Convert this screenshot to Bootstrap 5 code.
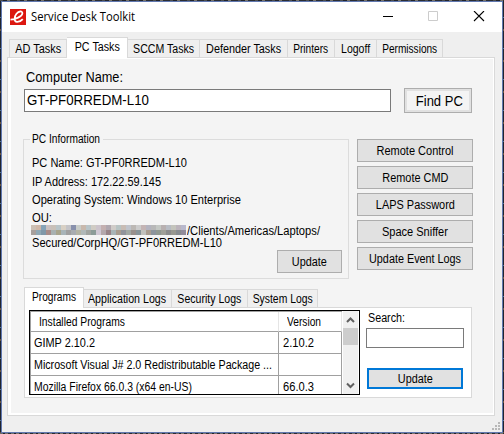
<!DOCTYPE html>
<html lang="en">
<head>
<meta charset="utf-8">
<meta name="viewport" content="width=device-width, initial-scale=1">
<title>Service Desk Toolkit</title>
<link href="https://cdn.jsdelivr.net/npm/bootstrap@5.3.0/dist/css/bootstrap.min.css" rel="stylesheet">
<style>
body{width:504px;height:434px;overflow:hidden;padding:1px;font:12px/16px "Liberation Sans",Arial,sans-serif;color:#000;
 background:repeating-linear-gradient(90deg,#4b4d50 0 3px,#22242a 3px 7px,#77736b 7px 10px,#2b2d33 10px 17px) 0 0/504px 1px no-repeat,repeating-linear-gradient(90deg,#6b6b6b 0 3px,#22242a 3px 5px,#77736b 5px 8px,#2b2d33 8px 11px) 0 433px/504px 1px no-repeat,repeating-linear-gradient(#20242d 0 17px,#507396 17px 18px,#20242d 18px 29px,#69523b 29px 31px)}
.win{width:502px;height:432px;border:1px solid #6078b0;background:#efefef;position:relative}
.t{display:inline-block;white-space:nowrap;transform-origin:0 50%}
.nav-link .t,.btn .t{transform-origin:50% 50%}
.titlebar{height:30px;background:#fff;padding-left:8px}
.ttl{font:12px/16px "Open Sans",sans-serif;margin-left:5px}
.tabrow{height:21px;margin:5px 0 -1px 7px;position:relative}
.tabrow .nav-link,.subtabs .nav-link{display:flex;justify-content:center;padding:0;color:#000;background:#efefef;border:1px solid #d9d9d9;border-left-width:0;border-radius:0;height:19px;line-height:19px;white-space:nowrap}
.tabrow .nav-link:first-child,.subtabs .nav-link:first-child{border-left-width:1px}
.tabrow .nav-link.active,.subtabs .nav-link.active{height:21px;line-height:19px;background:#fff;border-bottom:0;border-color:#d9d9d9}
.page{width:488px;height:359px;margin-left:5px;border:1px solid #d9d9d9;background:#f4f4f4;box-shadow:inset 3px 1px #fff,inset -1px -2px #fff;padding-left:15px}
.big{font-size:14px;white-space:nowrap}
.fld{background:#fff;border:1px solid #7a7a7a;border-radius:0;padding:0}
.wbtn{display:flex;justify-content:center;align-items:center;background:#e1e1e1;border:1px solid #adadad;border-radius:0;padding:0;font-size:12px;line-height:16px;color:#000;height:23px;white-space:nowrap}
.find{width:68px;height:25px;background:#f4f4f4;box-shadow:inset 0 0 0 2px #e1e1e1;font-size:14px;padding-left:2px}
.group{width:326px;height:140px;border:1px solid #dcdcdc;padding-left:8px;white-space:nowrap}
.group>div{height:16px}
.cap{width:73px;margin:-9px 0 0 -2px;padding-left:2px;background:#f4f4f4}
.mosaic{display:grid;grid-template-columns:repeat(31,5px);grid-auto-rows:5px;width:156px;height:10px;margin:2px 0 0 -1px}
.subtabs{height:21px;position:relative}
.subpage{width:448px;height:91px;border:1px solid #d9d9d9;background:#fff;padding:2px 0 0 4px}
.gridbox{width:331px;height:85px;border:1px solid #000;overflow:hidden}
.cells{width:312px;flex:none;display:grid;grid-template-columns:249px 63px;grid-template-rows:20px;grid-auto-rows:22px;border-top:1px solid #a0a0a0;box-shadow:inset 1px 0 #a0a0a0}
.cells>div{border-right:1px solid #a0a0a0;border-bottom:1px solid #a0a0a0;padding-left:4px;line-height:22px;white-space:nowrap;overflow:hidden}
.cells>.hd{line-height:20px;padding-left:9px;border-right-color:#e5e5e5}
.cells>.hd:nth-child(2){padding-left:8px}
.scroller{width:15px;margin-left:1px;background:#f0f0f0}
.thumb{width:15px;height:17px;background:#cdcdcd}
.primary{border:2px solid #0078d7;height:21px;width:96px}
.grip{position:absolute;right:2px;bottom:2px}
</style>
<script src="https://cdn.jsdelivr.net/npm/bootstrap@5.3.0/dist/js/bootstrap.bundle.min.js"></script>
</head>
<body>
<main class="win d-flex flex-column">
 <header class="titlebar d-flex align-items-center">
  <svg width="16" height="16" viewBox="0 0 16 16"><path fill="#dc1710" d="M0 0h16v16H0z"/><path d="M.5 10.6C5 10.6 12.4 7.4 12.4 4.3C12.4 1.6 8.8 2 6.5 4.8C3.8 8 4 12.6 7 12.9C9 13 11.2 12 12.8 10.2" fill="none" stroke="#fff" stroke-width="1.8"/></svg>
  <span class="ttl t" data-w="104">Service Desk Toolkit</span>
  <svg class="ms-auto" style="margin-right:17px" width="102" height="12" viewBox="0 0 102 12" fill="none"><path d="M0 5.5h10" stroke="#000"/><path d="M45.5.5h9v9h-9z" stroke="#ccc"/><path d="M91 0l10 10M101 0L91 10" stroke="#000" stroke-width="1.1"/></svg>
 </header>
 <nav class="nav tabrow align-items-end flex-nowrap">
  <a class="nav-link" style="width:58px"><span class="t" data-w="46">AD Tasks</span></a><a class="nav-link active" style="width:61px"><span class="t" data-w="45">PC Tasks</span></a><a class="nav-link" style="width:72px"><span class="t" data-w="61">SCCM Tasks</span></a><a class="nav-link" style="width:88px"><span class="t" data-w="75">Defender Tasks</span></a><a class="nav-link" style="width:47px"><span class="t" data-w="35">Printers</span></a><a class="nav-link" style="width:42px"><span class="t" data-w="29">Logoff</span></a><a class="nav-link" style="width:66px"><span class="t" data-w="55">Permissions</span></a>
 </nav>
 <section class="page">
  <div class="big" style="margin:11px 0 3px 3px"><span class="t" data-w="97">Computer Name:</span></div>
  <div class="d-flex align-items-center" style="height:25px;margin-left:1px">
   <div class="fld big" style="width:367px;height:23px;line-height:21px;padding-left:2px"><span class="t" data-w="122">GT-PF0RREDM-L10</span></div>
   <button class="btn wbtn find" style="margin-left:13px"><span class="t" data-w="47">Find PC</span></button>
  </div>
  <div class="d-flex" style="margin-top:26px">
   <div class="group">
    <div class="cap"><span class="t" data-w="68">PC Information</span></div>
    <div style="margin-top:8px"><span class="t" data-w="155">PC Name: GT-PF0RREDM-L10</span></div>
    <div style="margin-top:3px"><span class="t" data-w="129">IP Address: 172.22.59.145</span></div>
    <div style="margin-top:2px"><span class="t" data-w="209">Operating System: Windows 10 Enterprise</span></div>
    <div style="margin-top:2px"><span class="t" data-w="20">OU:</span></div>
    <div class="d-flex" style="margin-top:-3px"><div class="mosaic" id="mosaic"></div><span class="t" data-w="133">/Clients/Americas/Laptops/</span></div>
    <div style="margin-top:-4px"><span class="t" data-w="190">Secured/CorpHQ/GT-PF0RREDM-L10</span></div>
    <button class="btn wbtn" style="width:65px;margin:-1px 0 0 245px"><span class="t" data-w="35">Update</span></button>
   </div>
   <div class="d-flex flex-column gap-1" style="width:116px;margin-left:8px">
    <button class="btn wbtn"><span class="t" data-w="77">Remote Control</span></button><button class="btn wbtn"><span class="t" data-w="66">Remote CMD</span></button><button class="btn wbtn"><span class="t" data-w="79">LAPS Password</span></button><button class="btn wbtn"><span class="t" data-w="66">Space Sniffer</span></button><button class="btn wbtn"><span class="t" data-w="92">Update Event Logs</span></button>
   </div>
  </div>
  <nav class="nav subtabs align-items-end flex-nowrap" style="margin:8px 0 -1px 1px">
   <a class="nav-link active" style="width:60px"><span class="t" data-w="44">Programs</span></a><a class="nav-link" style="width:88px"><span class="t" data-w="78">Application Logs</span></a><a class="nav-link" style="width:76px"><span class="t" data-w="64">Security Logs</span></a><a class="nav-link" style="width:70px"><span class="t" data-w="60">System Logs</span></a>
  </nav>
  <div class="subpage d-flex" style="margin-left:1px">
   <div class="gridbox d-flex">
    <div class="cells"><div class="hd"><span class="t" data-w="86">Installed Programs</span></div><div class="hd"><span class="t" data-w="34">Version</span></div><div><span class="t" data-w="61">GIMP 2.10.2</span></div><div><span class="t" data-w="31">2.10.2</span></div><div><span class="t" data-w="238">Microsoft Visual J# 2.0 Redistributable Package ...</span></div><div></div><div><span class="t" data-w="158">Mozilla Firefox 66.0.3 (x64 en-US)</span></div><div><span class="t" data-w="31">66.0.3</span></div></div>
    <div class="scroller d-flex flex-column"><svg width="15" height="17"><path d="M4 11L7.5 7.5L11 11" fill="none" stroke="#606060" stroke-width="2"/></svg><div class="thumb"></div><svg class="mt-auto" width="15" height="17"><path d="M4 6.5L7.5 10L11 6.5" fill="none" stroke="#606060" stroke-width="2"/></svg></div>
   </div>
   <div style="margin-left:6px"><div style="padding-left:2px"><span class="t" data-w="37">Search:</span></div><div class="fld" style="width:98px;height:20px;margin-top:2px"></div><button class="btn wbtn primary" style="margin:20px 0 0 1px"><span class="t" data-w="35">Update</span></button></div>
  </div>
 </section>
 <svg class="grip" width="8" height="8" fill="#b8b8b8" shape-rendering="crispEdges"><path d="M6 0h2v2h-2zM3 3h2v2h-2zM6 3h2v2h-2zM0 6h2v2h-2zM3 6h2v2h-2zM6 6h2v2h-2z"/></svg>
</main>
<script>
// Condense each label to its designed width
document.querySelectorAll('.t').forEach(e=>{e.style.transform='scaleX('+(e.dataset.w/e.getBoundingClientRect().width)+')'});
// Redacted part of the OU path, two rows of blocks
const tones=('ccc0b4 d0b8a8 86a4b8 c8c0c0 c8c0b8 b8c4c8 d8d0c4 c4c4c8 8890ac c8ccc8 c8b8ac b8c4c8 d0ccc4 ccc4cc c4b0b0 b0a8b0 d0ccc8 b8c4c4 c8bcb4 c0c4cc bcb8b4 cccccc c4b4b4 b4b4c0 b8b8b8 c4c8c4 b8b0b0 b8bcc4 c4c4bc bcb4bc b8b8cc '+
'a8a09c 90a8b4 8098a8 a88c88 a8b0b0 a8a48c a8b4b8 a0a0a0 a8acb0 b4b4a4 b0b8b8 a0a4a0 8c9c98 d0c8d4 b4a8ac 988488 a8b4b8 a89c90 90949c a0a8a4 98908c 889498 c0c0bc a89c90 8c949c 909890 a0a098 8c8c8c 989890 888c90 908c9c').split(' ');
const mosaic=document.getElementById('mosaic');
tones.forEach(c=>{const d=document.createElement('div');d.style.background='#'+c;mosaic.append(d)});
</script>
</body>
</html>
